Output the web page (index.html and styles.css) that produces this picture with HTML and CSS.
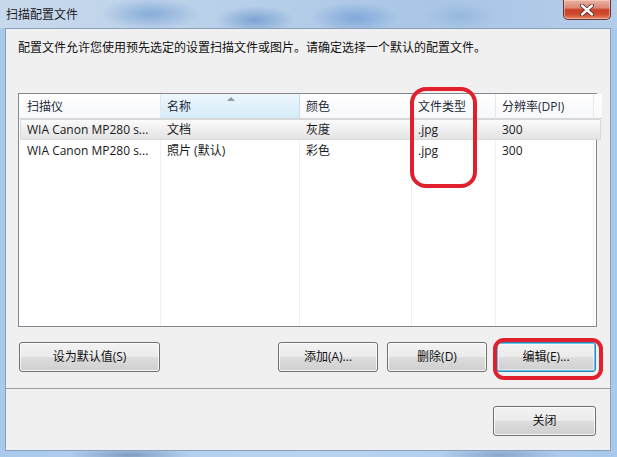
FILE: index.html
```html
<!DOCTYPE html>
<html lang="zh-CN">
<head>
<meta charset="utf-8">
<title>扫描配置文件</title>
<link rel="stylesheet" href="styles.css">
</head>
<body>
<div class="window">
  <div class="titlebar">
    <span class="title">扫描配置文件</span>
    <div class="close">
      <svg width="16" height="12" viewBox="0 0 16 12">
        <path d="M3 1.5 L13 10.5 M13 1.5 L3 10.5" stroke="#4a2420" stroke-width="4" stroke-linecap="round"/>
        <path d="M3 1.5 L13 10.5 M13 1.5 L3 10.5" stroke="#ffffff" stroke-width="2.4" stroke-linecap="round"/>
      </svg>
    </div>
  </div>
  <div class="client">
    <div class="main">
      <p class="desc">配置文件允许您使用预先选定的设置扫描文件或图片。请确定选择一个默认的配置文件。</p>
      <div class="list">
        <div class="hcell first">扫描仪</div>
        <div class="hcell sorted">名称<span class="sort"></span></div>
        <div class="hcell">颜色</div>
        <div class="hcell">文件类型</div>
        <div class="hcell">分辨率(DPI)</div>
        <div class="hcell blank"></div>

        <div class="cell sel first">WIA Canon MP280 s...</div>
        <div class="cell sel">文档</div>
        <div class="cell sel">灰度</div>
        <div class="cell sel">.jpg</div>
        <div class="cell sel">300</div>
        <div class="cell sel last"></div>

        <div class="cell first">WIA Canon MP280 s...</div>
        <div class="cell">照片 (默认)</div>
        <div class="cell">彩色</div>
        <div class="cell">.jpg</div>
        <div class="cell">300</div>
        <div class="cell end"></div>

        <div class="cell fill"></div>
        <div class="cell fill"></div>
        <div class="cell fill"></div>
        <div class="cell fill"></div>
        <div class="cell fill"></div>
        <div class="cell fill end"></div>
      </div>
      <div class="actions">
        <button class="btn wide">设为默认值(S)</button>
        <div class="group">
          <button class="btn">添加(A)...</button>
          <button class="btn">删除(D)</button>
          <button class="btn default">编辑(E)...</button>
        </div>
      </div>
    </div>
    <div class="footer">
      <button class="btn closebtn">关闭</button>
    </div>
  </div>
  <div class="mark mark-col"></div>
  <div class="mark mark-edit"></div>
</div>
</body>
</html>
```
FILE: styles.css
```css
* { box-sizing: border-box; }
html, body {
  margin: 0;
  padding: 0;
  width: 617px;
  height: 457px;
  overflow: hidden;
}
body {
  font-family: "Open Sans", "Noto Sans CJK SC", sans-serif;
  font-size: 12px;
  color: #000;
}
.window {
  position: relative;
  width: 617px;
  height: 457px;
  display: flex;
  flex-direction: column;
  background:
    radial-gradient(ellipse 60px 8px at 130px 455px, rgba(80,110,150,0.5), transparent),
    radial-gradient(ellipse 60px 8px at 500px 455px, rgba(80,110,150,0.4), transparent),
    linear-gradient(90deg, #a9c9ec 0%, #b9d4f0 50%, #a8c8ec 100%);
}
.titlebar {
  height: 28px;
  display: flex;
  align-items: flex-start;
  background:
    radial-gradient(ellipse 50px 16px at 150px 14px, rgba(90,140,200,0.55), transparent),
    radial-gradient(ellipse 40px 14px at 255px 20px, rgba(70,120,190,0.5), transparent),
    radial-gradient(ellipse 45px 16px at 355px 18px, rgba(90,140,205,0.55), transparent),
    radial-gradient(ellipse 35px 14px at 460px 16px, rgba(120,160,210,0.4), transparent),
    linear-gradient(90deg, #c8d9ec 0%, #b7cfe9 40%, #a9c6e6 70%, #b4cde9 100%);
}
.title {
  padding: 6px 0 0 6px;
  line-height: 16px;
  color: #1b1b1b;
  font-family: "Noto Sans CJK SC", sans-serif;
}
.close {
  margin-left: auto;
  margin-right: 6px;
  width: 48px;
  height: 20px;
  border: 1px solid #5d3a38;
  border-top: none;
  border-radius: 0 0 5px 5px;
  background: linear-gradient(#eab3a4 0%, #dc8a75 40%, #c8402a 52%, #cf4a2d 75%, #e58867 100%);
  box-shadow: inset 0 0 0 1px rgba(255,220,210,0.5);
  display: flex;
  align-items: center;
  justify-content: center;
}
.client {
  margin: 0 6px 6px 5px;
  height: 423px;
  border: 1px solid #8aa0ba;
  background: #f0f0f0;
  display: flex;
  flex-direction: column;
}
.main {
  height: 360px;
  padding: 10px 0 0 12px;
  border-bottom: 1px solid #a0a0a0;
}
.desc {
  margin: 0;
  height: 16px;
  line-height: 16px;
  font-family: "Noto Sans CJK SC", sans-serif;
  color: #111;
}
.list {
  margin-top: 38px;
  width: 579px;
  height: 234px;
  border: 1px solid #828790;
  background: #fff;
  display: grid;
  grid-template-columns: 142px 139px 112px 84px 98px 1fr;
  grid-template-rows: 25px 21px 21px 1fr;
}
.hcell {
  position: relative;
  padding-left: 6px;
  line-height: 26px;
  border-right: 1px solid #e3e8ee;
  border-bottom: 1px solid #d5d5d5;
  background: linear-gradient(#ffffff, #f7f8fa);
  color: #1e2a38;
  white-space: nowrap;
}
.hcell.first { padding-left: 8px; }
.hcell.blank { border-right: none; }
.hcell.sorted {
  background: linear-gradient(#eef7fd 0%, #e2f1fb 45%, #d6ecf9 100%);
  border-right: 1px solid #c5dcee;
}
.sort {
  position: absolute;
  left: 66px;
  top: 3px;
  width: 0;
  height: 0;
  border-left: 4px solid transparent;
  border-right: 4px solid transparent;
  border-bottom: 4px solid #8e9aa8;
}
.cell {
  padding-left: 6px;
  line-height: 21px;
  border-right: 1px solid #f0f0f0;
  white-space: nowrap;
  overflow: hidden;
  color: #1a1a1a;
}
.cell.first { padding-left: 8px; }
.cell.end { border-right: none; }
.cell.sel {
  border-right: none;
  border-top: 1px solid #d9d9d9;
  border-bottom: 1px solid #d9d9d9;
  line-height: 19px;
  background: linear-gradient(#fbfbfb, #ececec 60%, #e4e4e4);
}
.cell.sel.first {
  border-left: 1px solid #d9d9d9;
  border-radius: 2px 0 0 2px;
  margin-left: 1px;
  padding-left: 6px;
}
.cell.sel.last {
  border-right: 1px solid #d9d9d9;
  border-radius: 0 2px 2px 0;
  margin-right: 1px;
}
.actions {
  margin-top: 15px;
  width: 578px;
  height: 30px;
  padding-left: 1px;
  display: flex;
  justify-content: space-between;
}
.group {
  display: flex;
  gap: 9px;
}
.btn {
  width: 100px;
  height: 30px;
  margin: 0;
  padding: 0;
  border: 1px solid #707070;
  border-radius: 3px;
  background: linear-gradient(#f2f2f2 0%, #ebebeb 50%, #dddddd 51%, #cfcfcf 100%);
  box-shadow: inset 0 0 0 1px rgba(255,255,255,0.8);
  font-family: "Open Sans", "Noto Sans CJK SC", sans-serif;
  font-size: 12px;
  color: #111;
  line-height: 16px;
}
.btn.wide { width: 141px; }
.btn.default {
  border-color: #3c7fb1;
  box-shadow: inset 0 0 0 1px #5cc8ef, inset 0 0 0 2px rgba(255,255,255,0.5);
}
.footer {
  flex: 1;
  display: flex;
  justify-content: flex-end;
  padding: 17px 14px 0 0;
}
.closebtn { width: 103px; }
.mark {
  position: absolute;
  border: 4px solid #e0202c;
  pointer-events: none;
}
.mark-col {
  left: 410px;
  top: 87px;
  width: 67px;
  height: 101px;
  border-radius: 16px;
}
.mark-edit {
  left: 493px;
  top: 338px;
  width: 110px;
  height: 42px;
  border-radius: 11px;
}
```
